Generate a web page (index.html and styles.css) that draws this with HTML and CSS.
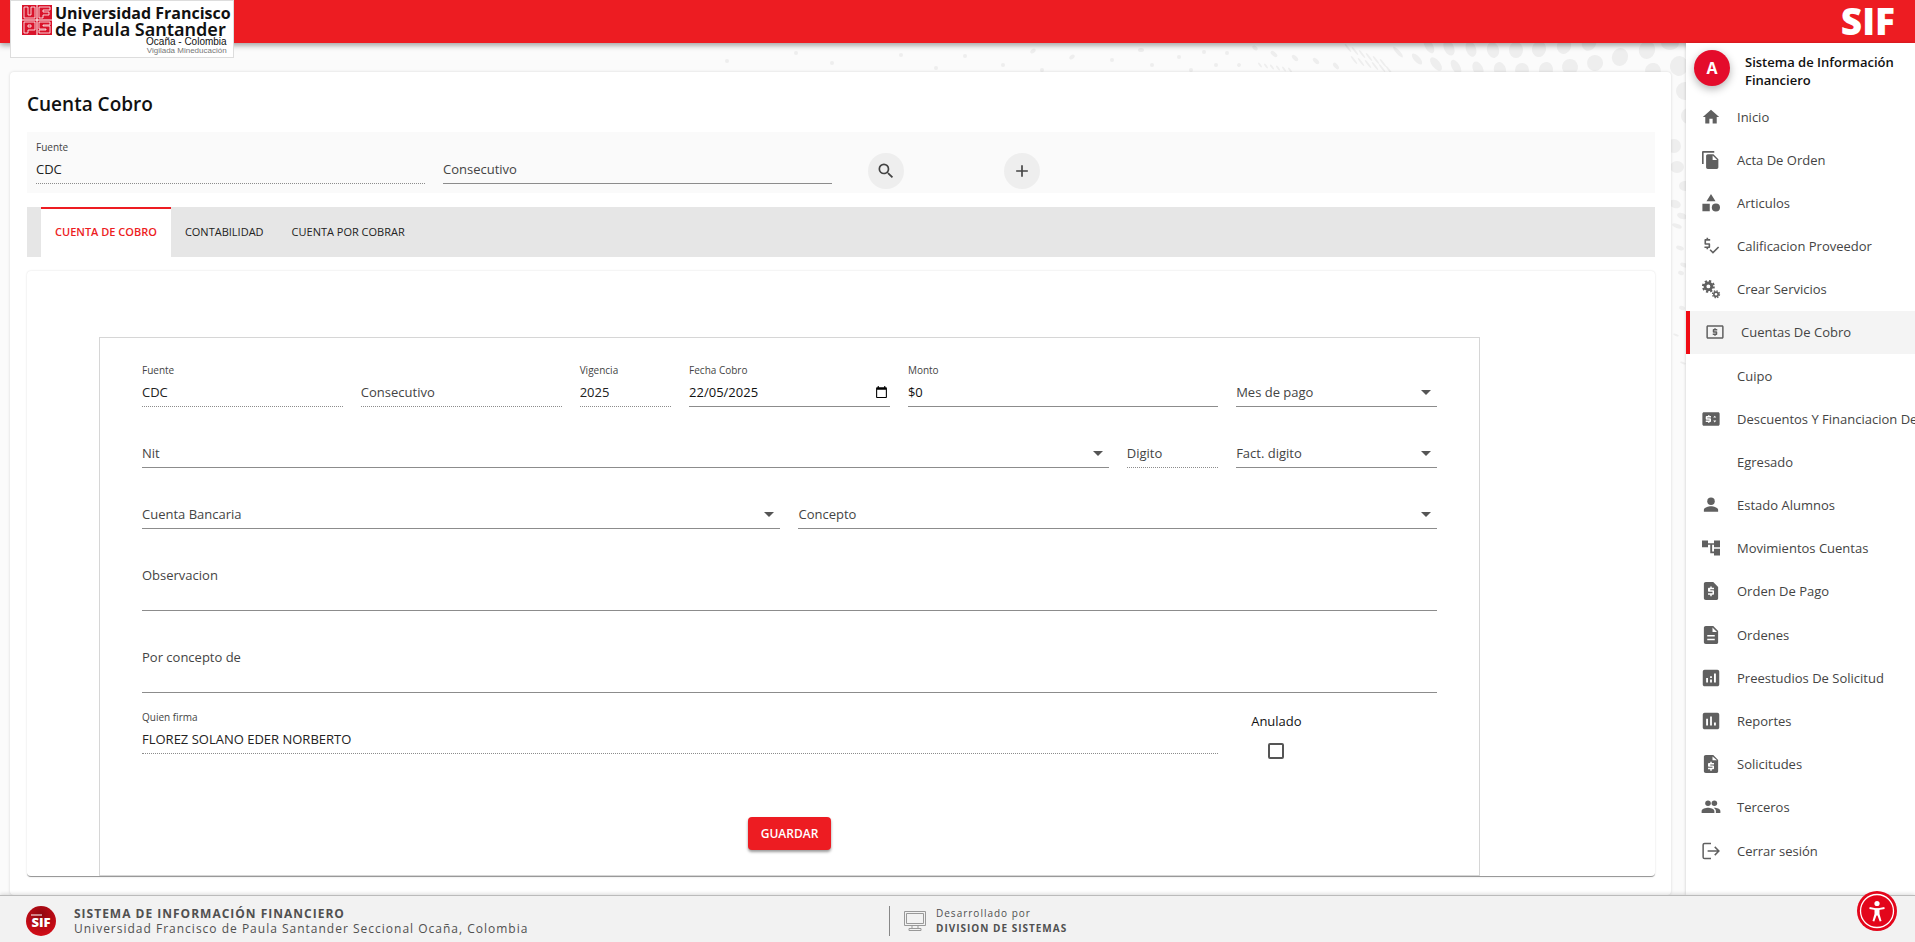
FILE: index.html
```html
<!DOCTYPE html>
<html lang="es">
<head>
    <meta charset="UTF-8">
    <meta name="viewport" content="width=device-width, initial-scale=1.0">
    <title>Cuenta Cobro - SIF</title>
    <link rel="stylesheet" href="styles.css">
</head>
<body>
    <header class="topbar">
        <a href="#" class="logo">
            <svg class="logo-mark" viewBox="0 0 30 30">
                <rect width="30" height="30" fill="#d9132b"/>
                <path d="M15 0v30M0 15h30" stroke="#fff" stroke-width="1"/>
                <path d="M2 2h4v8h3V2h4v11H2zM17 2h11v3h-7v2h6v3h-6v3h-4zM2 17h11v8H6v3H2zM6 20h3v2H6zM28 17H17v7h7v1h-7v3h11v-7h-7v-1h7z" fill="none" stroke="#fff" stroke-width="1" stroke-opacity=".8"/>
            </svg>
            <span class="logo-text">
                <strong class="logo-name">Universidad Francisco</strong>
                <strong class="logo-name logo-name-wide">de Paula Santander</strong>
                <span class="logo-city">Ocaña - Colombia</span>
                <span class="logo-note">Vigilada Mineducación</span>
            </span>
        </a>
        <strong class="brand">SIF</strong>
    </header>

    <div class="layout">
        <main class="main">
            <svg class="dots" id="dots" width="1000" height="420"></svg>
            <div class="card">
                <h1>Cuenta Cobro</h1>

                <!-- Search bar -->
                <form class="search grid">
                    <div class="field col-3">
                        <label for="sFuente">Fuente</label>
                        <input type="text" id="sFuente" value="CDC" disabled>
                    </div>
                    <div class="field empty col-3">
                        <label for="sConsecutivo">Consecutivo</label>
                        <input type="text" id="sConsecutivo">
                    </div>
                    <div class="action">
                        <button type="button" class="round-btn" aria-label="Buscar">
                            <svg viewBox="0 0 24 24"><path d="M15.5 14h-.79l-.28-.27A6.47 6.47 0 0 0 16 9.5 6.5 6.5 0 1 0 9.5 16c1.61 0 3.09-.59 4.23-1.57l.27.28v.79l5 4.99L20.49 19l-4.99-5zm-6 0C7.01 14 5 11.99 5 9.5S7.01 5 9.5 5 14 7.01 14 9.5 11.99 14 9.5 14z"/></svg>
                        </button>
                    </div>
                    <div class="action">
                        <button type="button" class="round-btn" aria-label="Agregar">
                            <svg viewBox="0 0 24 24"><path d="M19 13h-6v6h-2v-6H5v-2h6V5h2v6h6v2z"/></svg>
                        </button>
                    </div>
                </form>

                <!-- Tabs -->
                <div class="tabs">
                    <button type="button" class="tab active">CUENTA DE COBRO</button>
                    <button type="button" class="tab">CONTABILIDAD</button>
                    <button type="button" class="tab">CUENTA POR COBRAR</button>
                </div>

                <div class="panel">
                    <form class="cobro">
                        <div class="grid">
                            <div class="field col-2">
                                <label for="fuente">Fuente</label>
                                <input type="text" id="fuente" value="CDC" disabled>
                            </div>
                            <div class="field empty col-2">
                                <label for="consecutivo">Consecutivo</label>
                                <input type="text" id="consecutivo" disabled>
                            </div>
                            <div class="field col-1">
                                <label for="vigencia">Vigencia</label>
                                <input type="text" id="vigencia" value="2025" disabled>
                            </div>
                            <div class="field date col-2">
                                <label for="fecha">Fecha Cobro</label>
                                <input type="text" id="fecha" value="22/05/2025">
                                <button type="button" class="date-btn" aria-label="Abrir calendario">
                                    <svg viewBox="0 0 24 24"><path d="M20 3h-1V1h-2v2H7V1H5v2H4c-1.1 0-2 .9-2 2v16c0 1.1.9 2 2 2h16c1.1 0 2-.9 2-2V5c0-1.1-.9-2-2-2zm0 18H4V8h16v13z"/></svg>
                                </button>
                            </div>
                            <div class="field col-3">
                                <label for="monto">Monto</label>
                                <input type="text" id="monto" value="$0">
                            </div>
                            <div class="field empty select col-2">
                                <label for="mes">Mes de pago</label>
                                <select id="mes"><option></option></select>
                            </div>

                            <div class="field empty select col-9">
                                <label for="nit">Nit</label>
                                <select id="nit"><option></option></select>
                            </div>
                            <div class="field empty col-1">
                                <label for="digito">Digito</label>
                                <input type="text" id="digito" disabled>
                            </div>
                            <div class="field empty select col-2">
                                <label for="factDigito">Fact. digito</label>
                                <select id="factDigito"><option></option></select>
                            </div>

                            <div class="field empty select col-6">
                                <label for="banco">Cuenta Bancaria</label>
                                <select id="banco"><option></option></select>
                            </div>
                            <div class="field empty select col-6">
                                <label for="concepto">Concepto</label>
                                <select id="concepto"><option></option></select>
                            </div>

                            <div class="field empty area col-12">
                                <label for="observacion">Observacion</label>
                                <textarea id="observacion"></textarea>
                            </div>
                            <div class="field empty area col-12">
                                <label for="porConcepto">Por concepto de</label>
                                <textarea id="porConcepto"></textarea>
                            </div>

                            <div class="field col-10">
                                <label for="firma">Quien firma</label>
                                <input type="text" id="firma" value="FLOREZ SOLANO EDER NORBERTO" disabled>
                            </div>
                            <div class="check col-2">
                                <label for="anulado">Anulado</label>
                                <input type="checkbox" id="anulado">
                            </div>
                        </div>
                        <button type="button" class="btn">GUARDAR</button>
                    </form>
                </div>
            </div>
        </main>

        <aside class="sidebar">
            <div class="profile">
                <span class="avatar">A</span>
                <strong>Sistema de Información Financiero</strong>
            </div>
            <nav class="menu">
                <a href="#"><svg viewBox="1 1 22 22"><path d="M10 20v-6h4v6h5v-8h3L12 3 2 12h3v8z"/></svg>Inicio</a>
                <a href="#"><svg viewBox="1 1 22 22"><path d="M16 1H2.500C1.700 1 1 1.700 1 2.500V17h2V3h13V1zm-1 4 6 6v10c0 1.100-.9 2-2 2H8c-1.100 0-2-.9-2-2V7c0-1.100.9-2 2-2h7zm-1 7h5.500L14 6.500V12z"/></svg>Acta De Orden</a>
                <a href="#"><svg viewBox="1 1 22 22"><path d="M12 1l-5.500 9h11zM1.500 13h9v9h-9z"/><circle cx="18" cy="17.500" r="5"/></svg>Articulos</a>
                <a href="#"><svg viewBox="1 1 22 22"><path d="M11 5.500V3.500H8.500V2h-2v1.500H5c-.55 0-1 .45-1 1v5c0 .55.45 1 1 1h4v2H4v2h2.500V16h2v-1.500H10c.55 0 1-.45 1-1V9.500c0-.55-.45-1-1-1H6v-3h5zM20.600 12.500l-6.200 6.200-2.800-2.800-1.400 1.400 4.200 4.200 7.600-7.600z"/></svg>Calificacion Proveedor</a>
                <a href="#"><svg viewBox="0 0 24 24"><g fill="none" stroke="currentColor"><circle cx="8.500" cy="8.500" r="4.500" stroke-width="3.800"/><circle cx="8.500" cy="8.500" r="7.200" stroke-width="2.800" stroke-dasharray="2.900 2.755"/><circle cx="18.700" cy="19" r="2.900" stroke-width="2.200"/><circle cx="18.700" cy="19" r="4.600" stroke-width="1.800" stroke-dasharray="1.900 1.713"/></g></svg>Crear Servicios</a>
                <a href="#" class="active"><svg viewBox="0 0 24 24"><path d="M11 17h2v-1h1c.55 0 1-.45 1-1v-3c0-.55-.45-1-1-1h-3v-1h4V8h-2V7h-2v1h-1c-.55 0-1 .45-1 1v3c0 .55.45 1 1 1h3v1H9v2h2v1zM21.500 3h-19C1.400 3 .5 3.900.5 5v14c0 1.100.9 2 2 2h19c1.100 0 2-.9 2-2V5c0-1.100-.9-2-2-2zm0 16h-19V5h19v14z"/></svg>Cuentas De Cobro</a>
                <a href="#"><svg viewBox="0 0 24 24"></svg>Cuipo</a>
                <a href="#"><svg viewBox="0 0 24 24"><path d="M21.500 3h-19C1.400 3 .5 3.900.5 5v14c0 1.100.9 2 2 2h19c1.100 0 2-.9 2-2V5c0-1.100-.9-2-2-2zM12 10H7v1h4c.55 0 1 .45 1 1v3c0 .55-.45 1-1 1h-1v1H8v-1H5v-2h5v-1H6c-.55 0-1-.45-1-1V9c0-.55.45-1 1-1h2V7h2v1h2v2zm5 6.500l-2-2.500h4l-2 2.500zM15 10l2-2.500 2 2.500h-4z"/></svg>Descuentos Y Financiacion De</a>
                <a href="#"><svg viewBox="0 0 24 24"></svg>Egresado</a>
                <a href="#"><svg viewBox="0 0 24 24"><circle cx="12" cy="7" r="5"/><path d="M12 13.500c-3.300 0-9.500 1.700-9.500 4.800V21h19v-2.700c0-3.100-6.200-4.800-9.500-4.800z"/></svg>Estado Alumnos</a>
                <a href="#"><svg viewBox="0 0 24 24"><path d="M24 11V2h-8v3.500H8V2H0v9h8V7.500h3V19h5v3h8v-9h-8v3.500h-2.500v-9H16V11z"/></svg>Movimientos Cuentas</a>
                <a href="#"><svg viewBox="0 0 24 24"><path d="M15 0H5C3.700 0 2.500 1 2.500 2.200v19.600C2.500 23 3.700 24 5 24h14.500c1.200 0 2-1 2-2.200V6.500L15 0zm1 9.500h-5V11h4c.6 0 1 .5 1 1v4c0 .6-.5 1-1 1h-2v2h-2v-2H8v-2h6v-2h-5c-.6 0-1-.5-1-1V8.500c0-.6.500-1 1-1h2V6h2v1.500h3v2z"/></svg>Orden De Pago</a>
                <a href="#"><svg viewBox="0 0 24 24"><path d="M15 0H5C3.700 0 2.500 1 2.500 2.200v19.600C2.500 23 3.700 24 5 24h14.500c1.200 0 2-1 2-2.200V6.500L15 0zm2 19H7v-2h10v2zm0-5H7v-2h10v2zm-3-6V2l6 6h-6z"/></svg>Ordenes</a>
                <a href="#"><svg viewBox="0 0 24 24"><path d="M20.500 1h-17C2.100 1 1 2.100 1 3.500v17C1 21.900 2.100 23 3.500 23h17c1.400 0 2.500-1.100 2.500-2.500v-17C23 2.100 21.900 1 20.500 1zM8 18H5.500v-6H8v6zm5.200 0h-2.400v-4h2.400v4zm0-6h-2.400V9.500h2.400V12zm5.300 6H16V6h2.500v12z"/></svg>Preestudios De Solicitud</a>
                <a href="#"><svg viewBox="0 0 24 24"><path d="M20.500 1h-17C2.100 1 1 2.100 1 3.500v17C1 21.900 2.100 23 3.500 23h17c1.400 0 2.500-1.100 2.500-2.500v-17C23 2.100 21.900 1 20.500 1zM8 18H5.500V9H8v9zm5.200 0h-2.400V6h2.400v12zm5.300 0H16v-4h2.500v4z"/></svg>Reportes</a>
                <a href="#"><svg viewBox="0 0 24 24"><path d="M15 0H5C3.700 0 2.500 1 2.500 2.200v19.600C2.500 23 3.700 24 5 24h14.500c1.200 0 2-1 2-2.200V6.500L15 0zm1 12.500h-5V14h4c.6 0 1 .5 1 1v3c0 .6-.5 1-1 1h-2v2h-2v-2H8v-2h6v-1.500H9c-.6 0-1-.5-1-1v-3c0-.6.500-1 1-1h2V9h2v1.500h3v2zM14 7V2l6 5h-6z"/></svg>Solicitudes</a>
                <a href="#"><svg viewBox="0 0 24 24"><circle cx="8" cy="7" r="3.700"/><circle cx="16.500" cy="7" r="3.700"/><path d="M8 13c-3 0-8.500 1.400-8.500 4.300V20h17v-2.700C16.500 14.400 11 13 8 13zM16.500 13l-1 .1c1.800 1.100 3 2.500 3 4.200V20h6v-2.700c0-2.900-5-4.300-8-4.300z"/></svg>Terceros</a>
                <a href="#"><svg viewBox="0 0 24 24"><path d="M12 2H3.500C2.500 2 1.500 2.800 1.500 3.800v16.400c0 1 1 1.800 2 1.800H12M7.500 12H22M17 6.500l5.500 5.500-5.500 5.500" fill="none" stroke="currentColor" stroke-width="2"/></svg>Cerrar sesión</a>
            </nav>
        </aside>
    </div>

    <footer class="footer">
        <svg class="footer-logo" viewBox="0 0 30 30">
            <defs>
                <radialGradient id="redBall" cx="50%" cy="30%" r="70%">
                    <stop offset="0" stop-color="#8e0710"/>
                    <stop offset="1" stop-color="#d40d18"/>
                </radialGradient>
            </defs>
            <circle cx="15" cy="15" r="15" fill="url(#redBall)"/>
            <path d="M5 9h11" stroke="#fff" stroke-width="1"/>
            <text x="15" y="21" text-anchor="middle" class="ball-text">SIF</text>
        </svg>
        <div class="footer-text">
            <strong>SISTEMA DE INFORMACIÓN FINANCIERO</strong>
            <span>Universidad Francisco de Paula Santander Seccional Ocaña, Colombia</span>
        </div>
        <div class="footer-dev">
            <svg class="monitor" viewBox="0 0 22 20"><path d="M.5.500h21v14H.500zM2.500 2.500h17v10h-17zM8 14.500v3M14 14.500v3M5 17.500h12v2H5z" fill="none" stroke="#999"/></svg>
            <div class="footer-text small">
                <span>Desarrollado por</span>
                <strong>DIVISION DE SISTEMAS</strong>
            </div>
        </div>
    </footer>

    <button type="button" class="access" aria-label="Accesibilidad">
        <svg viewBox="0 0 40 40">
            <circle cx="20" cy="20" r="16.500" fill="none" stroke="#fff" stroke-width="1.300"/>
            <circle cx="20" cy="12.500" r="2.600" fill="#fff"/>
            <path d="M12.500 17l6 1.200h3l6-1.200" fill="none" stroke="#fff" stroke-width="1.800"/>
            <path d="M17.500 17.500h5v5.500l2 7-1.800.5-2.200-6h-1l-2.200 6-1.800-.5 2-7z" fill="#fff"/>
        </svg>
    </button>

    <script src="script.js"></script>
</body>
</html>
```

FILE: script.js
```js
// Halftone dots behind the card: x, y, rx, ry, angle
const dots = [
    [743, 3, 4, 8, -30], [763, 5, 5, 8, -25], [785, 6, 5, 8, -20], [807, 7, 6, 8, -15],
    [830, 7, 7, 8, 0], [853, 6, 7, 8, 10], [878, 3, 7, 8, 20], [903, 0, 7, 8, 30],
    [961, 7, 8, 9, 20], [934, 14, 8, 9, 20], [909, 20, 8, 8, 20], [884, 24, 8, 8, 15],
    [860, 27, 7, 8, 10], [836, 27, 7, 7, 0], [814, 27, 6, 8, -15], [792, 26, 5, 8, -25],
    [770, 24, 4, 8, -30], [750, 21, 4, 8, -40], [731, 16, 3, 7, -42], [712, 9, 2, 7, -42],
    [967, 28, 8, 8, 10], [993, 23, 9, 10, 10], [984, 0, 9, 7, 0],
    [999, 48, 9, 9, 0], [1003, 73, 8, 8, 0], [988, 103, 7, 7, 0], [991, 124, 7, 6, 0],
    [999, 143, 6, 5, 0], [989, 161, 6, 4, 20], [996, 173, 5, 3, 20], [991, 183, 5, 2, 20],
    [994, 205, 4, 2, 20], [998, 222, 4, 2, 20], [995, 230, 3, 2, 20], [996, 265, 3, 2, 20],
    [990, 292, 3, 1, 20], [997, 320, 3, 1, 20],
    [41, 18, 2, 2, 0], [110, 10, 2, 2, 0], [146, 20, 2, 2, 0], [215, 12, 2, 2, 0],
    [250, 25, 2, 2, 0], [279, 13, 2, 2, 0], [317, 22, 2, 2, 0], [347, 8, 3, 2, -40],
    [356, 27, 2, 2, 0], [386, 14, 3, 2, -40], [426, 17, 2, 2, 0], [455, 7, 3, 2, 0],
    [466, 22, 2, 2, 0], [493, 14, 2, 2, 0], [505, 27, 2, 2, 0], [518, 9, 2, 2, 0],
    [530, 22, 2, 2, 0], [541, 10, 2, 2, 0], [553, 22, 2, 2, 40], [569, 5, 3, 2, 40],
    [588, 11, 4, 2, 40], [609, 15, 4, 2, 45], [630, 18, 4, 2, 45], [650, 23, 4, 2, 50]
];

// narrow streaks where the pattern folds
for (let i = 0; i < 6; i++) {
    dots.push([662 + i * 7, 5 + i * 3, 1, 5, -38]);
    dots.push([668 + i * 7, 17 + i * 2, 1, 5, -38]);
    dots.push([574 + i * 6, 22 + i, 1, 3, -38]);
}

const svg = document.getElementById('dots');
dots.forEach(([x, y, rx, ry, angle]) => {
    const dot = document.createElementNS('http://www.w3.org/2000/svg', 'ellipse');
    dot.setAttribute('cx', x);
    dot.setAttribute('cy', y);
    dot.setAttribute('rx', rx);
    dot.setAttribute('ry', ry);
    dot.setAttribute('transform', `rotate(${angle} ${x} ${y})`);
    svg.appendChild(dot);
});
```

FILE: styles.css
```css
* {
    box-sizing: border-box;
}

body {
    margin: 0;
    height: 100vh;
    display: flex;
    flex-direction: column;
    overflow: hidden;
    background-color: #fbfbfb;
    font-family: "Open Sans", "Noto Sans", sans-serif;
    font-size: 13px;
    color: #111;
}

button,
input,
select,
textarea {
    font: inherit;
    color: inherit;
}

a {
    color: inherit;
    text-decoration: none;
}

/* Top bar */
.topbar {
    position: relative;
    z-index: 2;
    flex: none;
    display: flex;
    justify-content: space-between;
    height: 43px;
    padding: 0 20px 0 10px;
    background-color: #ed1c22;
    box-shadow: 0 2px 6px rgba(0, 0, 0, 0.4);
}

.logo {
    display: flex;
    gap: 3px;
    width: 224px;
    height: 58px;
    padding: 4px 4px 0 11px;
    background-color: #fff;
    border: 1px solid #ddd;
}

.logo-mark {
    flex: none;
    width: 30px;
    height: 30px;
}

.logo-text {
    display: flex;
    flex-direction: column;
    white-space: nowrap;
    color: #111;
}

.logo-name {
    font-size: 16px;
    line-height: 16px;
}

.logo-name-wide {
    font-family: "Noto Sans", sans-serif;
    font-weight: 600;
    font-size: 18px;
}

.logo-city,
.logo-note {
    align-self: flex-end;
    padding-right: 4px;
    font-family: "Liberation Sans", Arial, sans-serif;
    font-size: 10px;
    line-height: 9px;
}

.logo-note {
    font-size: 8px;
    color: #777;
}

.brand {
    font-size: 37px;
    font-weight: 800;
    line-height: 41px;
    color: #fff;
}

.layout {
    flex: 1;
    display: flex;
    min-height: 0;
}

/* Main card */
.main {
    position: relative;
    flex: 1;
    min-width: 0;
    display: flex;
    padding: 29px 15px 0 10px;
}

.dots {
    position: absolute;
    top: 0;
    right: 0;
    fill: #eee;
}

.card {
    position: relative;
    flex: 1;
    min-width: 0;
    padding: 17px 16px 0 17px;
    background-color: #fff;
    border-radius: 4px;
    box-shadow: 0 0 3px rgba(0, 0, 0, 0.15);
}

.card h1 {
    margin: 0 0 13px;
    font-size: 19px;
    font-weight: 600;
    line-height: 30px;
}

.grid {
    display: grid;
    grid-template-columns: repeat(12, minmax(0, 1fr));
    column-gap: 18px;
}

.col-1 { grid-column: span 1; }
.col-2 { grid-column: span 2; }
.col-3 { grid-column: span 3; }
.col-6 { grid-column: span 6; }
.col-9 { grid-column: span 9; }
.col-10 { grid-column: span 10; }
.col-12 { grid-column: span 12; }

.search {
    height: 61px;
    padding: 0 9px;
    background-color: #fafafa;
}

.search .field {
    height: 52px;
}

.action {
    padding: 21px 0 0 18px;
}

.round-btn {
    display: flex;
    align-items: center;
    justify-content: center;
    width: 36px;
    height: 36px;
    padding: 0;
    border: none;
    border-radius: 50%;
    background-color: #eee;
    cursor: pointer;
}

.round-btn svg {
    width: 20px;
    height: 20px;
    fill: #444;
}

/* Fields */
.field {
    position: relative;
    display: flex;
    flex-direction: column;
    justify-content: flex-end;
    height: 61px;
}

.field label {
    font-size: 10px;
    line-height: 16px;
    color: #444;
}

.field.empty label {
    position: absolute;
    left: 0;
    bottom: 5px;
    font-size: 13px;
    line-height: 20px;
    pointer-events: none;
}

.field input,
.field select,
.field textarea {
    width: 100%;
    height: 29px;
    padding: 0;
    border: none;
    border-bottom: 1px solid #8c8c8c;
    border-radius: 0;
    outline: none;
    background: none;
    appearance: none;
    resize: none;
}

.field input:disabled {
    border-bottom-style: dotted;
    color: #222;
}

.field.area {
    height: 82px;
}

.field.area textarea {
    height: 50px;
}

.field.area label {
    bottom: 26px;
}

.field.select::after {
    content: "";
    position: absolute;
    right: 6px;
    bottom: 12px;
    border: 5px solid transparent;
    border-top-color: #555;
    border-bottom: none;
}

.date-btn {
    position: absolute;
    right: 2px;
    bottom: 8px;
    width: 13px;
    height: 14px;
    padding: 0;
    border: none;
    background: none;
}

.date-btn svg {
    display: block;
    width: 13px;
    height: 14px;
}

.check {
    justify-self: start;
    display: flex;
    flex-direction: column;
    align-items: center;
    gap: 12px;
    padding: 18px 0 0 15px;
}

.check label {
    line-height: 20px;
}

.check input {
    width: 16px;
    height: 16px;
    margin: 0;
    border: 2px solid #555;
    border-radius: 2px;
    background-color: #fff;
    appearance: none;
}

/* Tabs */
.tabs {
    display: flex;
    height: 50px;
    margin-top: 14px;
    padding-left: 14px;
    background-color: #e6e6e6;
}

.tab {
    padding: 0 14px 4px;
    border: none;
    border-top: 2px solid transparent;
    background: none;
    font-size: 11px;
    color: #222;
    cursor: pointer;
}

.tab.active {
    border-top-color: #ed1c22;
    background-color: #fff;
    font-weight: 600;
    color: #ed1c22;
}

.panel {
    margin-top: 14px;
    padding: 66px 175px 0 72px;
    border-bottom: 1px solid #999;
    border-radius: 4px;
    box-shadow: 0 0 2px rgba(0, 0, 0, 0.15);
}

.cobro {
    height: 539px;
    padding: 8px 42px 0;
    border: 1px solid #d6d6d6;
    text-align: center;
}

.cobro .grid {
    text-align: left;
}

.btn {
    height: 33px;
    margin-top: 58px;
    padding: 0 13px 1px;
    border: none;
    border-radius: 4px;
    background-color: #ed1c22;
    box-shadow: 0 2px 3px rgba(0, 0, 0, 0.4);
    font-size: 12px;
    font-weight: 600;
    color: #fff;
    cursor: pointer;
}

/* Sidebar */
.sidebar {
    position: relative;
    z-index: 3;
    flex: none;
    width: 229px;
    display: flex;
    flex-direction: column;
    overflow: hidden;
    background-color: #fff;
    box-shadow: 0 0 3px rgba(0, 0, 0, 0.2);
}

.profile {
    display: flex;
    gap: 15px;
    height: 52px;
    padding: 7px 8px 0;
    line-height: 18px;
}

.profile strong {
    padding-top: 3px;
    font-weight: 600;
}

.avatar {
    flex: none;
    width: 36px;
    height: 36px;
    border-radius: 50%;
    background-color: #e40c2b;
    box-shadow: 0 3px 8px rgba(0, 0, 0, 0.3);
    font-size: 16px;
    font-weight: 700;
    line-height: 36px;
    text-align: center;
    color: #fff;
}

.menu {
    flex: 1;
    display: flex;
    flex-direction: column;
    padding-bottom: 23px;
}

.menu a {
    flex: 1;
    display: flex;
    align-items: center;
    gap: 17px;
    padding-left: 16px;
    white-space: nowrap;
    color: #444;
}

.menu a.active {
    border-left: 4px solid #f00c14;
    background-color: #f4f4f4;
}

.menu svg {
    flex: none;
    width: 18px;
    height: 18px;
    overflow: visible;
    fill: #606060;
    color: #606060;
}

/* Footer */
.footer {
    position: relative;
    z-index: 4;
    flex: none;
    display: grid;
    grid-template-columns: 30px 797px auto;
    justify-content: start;
    align-items: center;
    column-gap: 18px;
    height: 47px;
    padding: 4px 26px 0;
    border-top: 1px solid #bbb;
    background-color: #f2f2f2;
    box-shadow: 0 -1px 4px rgba(0, 0, 0, 0.15);
}

.footer-logo {
    width: 30px;
    height: 30px;
}

.ball-text {
    font-size: 13px;
    font-weight: 800;
    fill: #fff;
}

.footer-text {
    display: flex;
    flex-direction: column;
    font-size: 12px;
    line-height: 15px;
    letter-spacing: 1px;
    color: #505050;
}

.footer-text.small {
    font-size: 10px;
}

.footer-dev {
    display: flex;
    align-items: center;
    gap: 10px;
    height: 30px;
    padding-left: 14px;
    border-left: 1px solid #888;
}

.monitor {
    width: 22px;
    height: 20px;
}

.access {
    position: fixed;
    right: 18px;
    bottom: 11px;
    z-index: 5;
    width: 40px;
    height: 40px;
    padding: 0;
    border: none;
    border-radius: 50%;
    background-color: #e3061b;
    cursor: pointer;
}

.access svg {
    display: block;
}
```
